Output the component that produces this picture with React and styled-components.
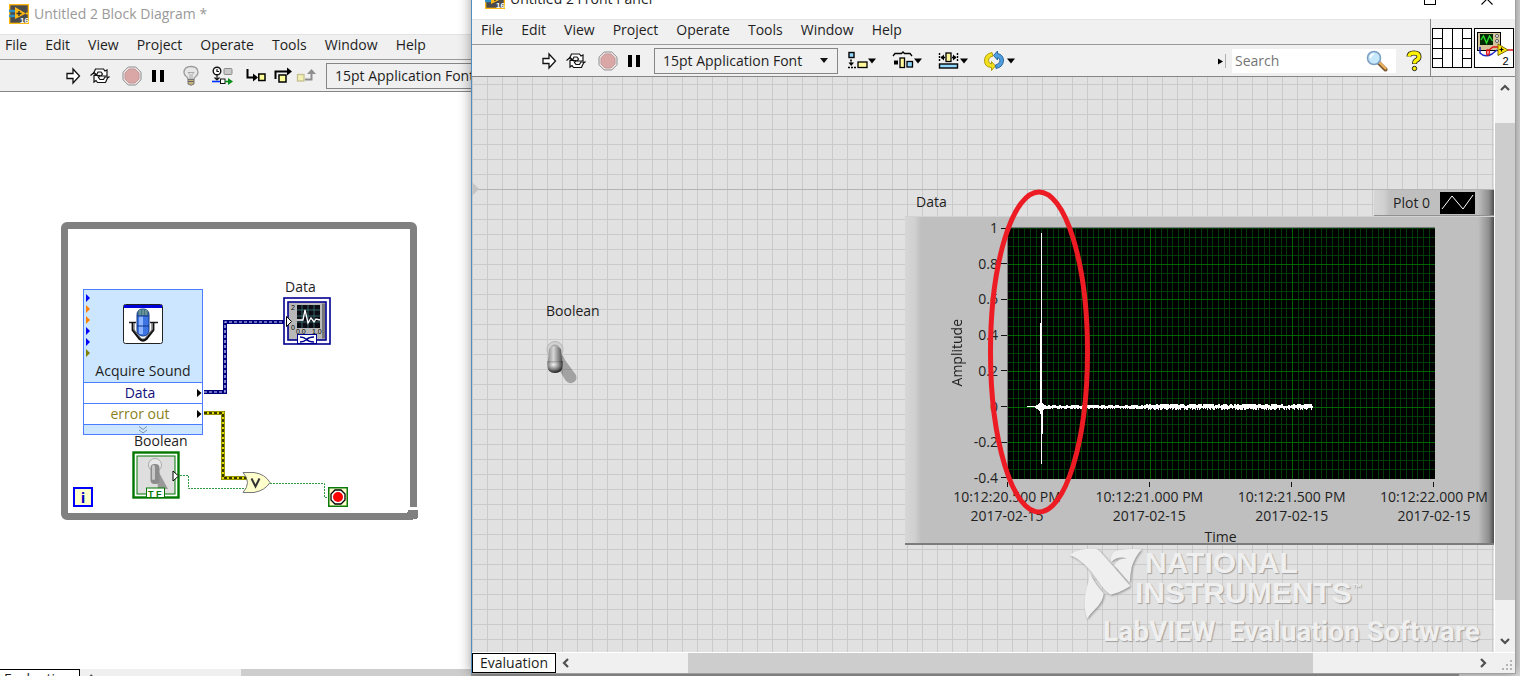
import React, { useState } from 'react'
import styled, { createGlobalStyle, css } from 'styled-components'

const menuItems = ['File', 'Edit', 'View', 'Project', 'Operate', 'Tools', 'Window', 'Help'];

const yLabels = ['1', '0.8', '0.6', '0.4', '0.2', '0', '-0.2', '-0.4'];

const xLabels = ['10:12:20.500 PM', '10:12:21.000 PM', '10:12:21.500 PM', '10:12:22.000 PM'];

const inputColors = ['#0000ff', '#ff8000', '#ff8000', '#0000ff', '#0000ff', '#808000'];

/* ---------- icons ---------- */

const ViIcon = () => (
  <svg width="20" height="20" viewBox="0 0 20 20">
    <rect x="0.5" y="0.5" width="19" height="19" fill="#4b4b4b" stroke="#fdb813" strokeWidth="1.6" />
    <path d="M0 7h6M0 12h6" stroke="#2d8fc4" strokeWidth="2.4" />
    <path d="M6 3l11 6.5L6 15z" fill="#fdb813" />
    <path d="M7.5 9.5h5M10 7v5" stroke="#333" strokeWidth="1.4" />
    <path d="M17 9.500h3" stroke="#fdb813" strokeWidth="2" />
    <text x="11" y="18.500" fontSize="8" fontWeight="700" fill="#fff" fontFamily="Liberation Sans">16</text>
  </svg>
);

const RunIcon = () => (
  <svg width="16" height="18" viewBox="0 0 16 18">
    <path d="M1 6.5h6v-4.500l6.500 7-6.500 7v-4.500H1z" fill="#fff" stroke="#111" strokeWidth="1.300" />
  </svg>
);

const RunContinuousIcon = () => (
  <svg width="20" height="18" viewBox="0 0 20 18">
    <path d="M3.500 6.500L5.500 2h8l1.500 2 2-1v6h-6l1.500-2-1.500-2H8L6.500 8z" fill="#fff" stroke="#111" strokeWidth="1.200" />
    <path d="M17.500 11l-2 4.500h-8L6 13.500l-2 1.500V8.500h6L8.500 10.500l1.500 2h3.500l1.500-2.500h4z" fill="#fff" stroke="#111" strokeWidth="1.200" />
    <path d="M0.500 8.500L4 5.500l4.500 4" fill="none" stroke="#111" strokeWidth="1.200" />
  </svg>
);

const AbortIcon = () => (
  <svg width="20" height="20" viewBox="0 0 20 20">
    <path d="M6.200 1h7.600L19 6.200v7.600L13.800 19H6.200L1 13.800V6.200z" fill="#efe6e6" stroke="#8f8f8f" />
    <path d="M7 3h6l4 4v6l-4 4H7l-4-4V7z" fill="#dba6a6" stroke="#c49a9a" />
  </svg>
);

const PauseIcon = () => (
  <svg width="16" height="16" viewBox="0 0 16 16">
    <path d="M2 2h4v12H2zM10 2h4v12h-4z" fill="#000" />
  </svg>
);

const BulbIcon = () => (
  <svg width="18" height="22" viewBox="0 0 18 22">
    <path d="M6 14.500Q6 12.500 4 11.200Q2 9.500 2 7.500Q2 1.500 9 1.500T16 7.500Q16 9.500 14 11.200Q12 12.500 12 14.500z" fill="#e6e6e6" stroke="#9a9a9a" strokeWidth="1.300" />
    <path d="M8 14V9.500L6 7.500M10 14V9.500l2-2M6 7.500h6" fill="none" stroke="#aaa" />
    <path d="M6 14.500h6v4.500q-3 2.500-6 0z" fill="#c7b37a" stroke="#777" />
    <path d="M6 16.500h6" stroke="#666" />
  </svg>
);

const RetainIcon = () => (
  <svg width="22" height="20" viewBox="0 0 22 20">
    <circle cx="5" cy="5" r="3.800" fill="#fff" stroke="#111" strokeWidth="1.400" />
    <path d="M5 3v2.500h2M5 9v5M2.500 11.500L5 14l2.500-2.500" fill="none" stroke="#111" strokeWidth="1.200" />
    <rect x="12" y="2.500" width="8" height="6" rx="1" fill="#c9c9c9" stroke="#8d8d8d" />
    <path d="M0 15.500h9" stroke="#0030ff" strokeWidth="1.600" />
    <rect x="8.500" y="13" width="4.500" height="4.500" fill="#fff" stroke="#111" />
    <path d="M13 15.500h4" stroke="#0b8f1c" strokeWidth="1.600" />
    <path d="M16 12l5 3.500-5 3.500z" fill="#0b8f1c" />
  </svg>
);

const StepIntoIcon = () => (
  <svg width="20" height="16" viewBox="0 0 20 16">
    <path d="M1.500 1v8.500h6" fill="none" stroke="#000" strokeWidth="2" />
    <path d="M7 5.500l5 4-5 4z" fill="#000" />
    <rect x="12.800" y="6" width="6.200" height="6.500" fill="#ffff99" stroke="#000" strokeWidth="1.500" />
  </svg>
);

const StepOverIcon = () => (
  <svg width="18" height="18" viewBox="0 0 18 18">
    <path d="M1.500 12V4.500h12" fill="none" stroke="#000" strokeWidth="2" />
    <path d="M13 0.500l5 4-5 4z" fill="#000" />
    <rect x="5" y="8" width="7" height="7" fill="#ffff99" stroke="#000" strokeWidth="1.500" />
  </svg>
);

const StepOutIcon = () => (
  <svg width="22" height="16" viewBox="0 0 22 16">
    <rect x="1.500" y="6.500" width="6.500" height="6.500" fill="#f3f0b4" stroke="#c4c090" strokeWidth="1.300" />
    <path d="M9 11.500h6.500V5" fill="none" stroke="#8e8e8e" strokeWidth="2" />
    <path d="M11 6l4.500-5L20 6z" fill="#8e8e8e" />
  </svg>
);

const AlignIcon = () => (
  <svg width="30" height="20" viewBox="0 0 30 20">
    <rect x="3" y="1.500" width="5" height="5" fill="#8fd8ff" stroke="#000" strokeWidth="1.400" />
    <path d="M5 8.500v4M2 16.500h8" stroke="#000" strokeWidth="1.600" strokeDasharray="2 1" />
    <path d="M2.500 11.500h5.500L5.200 15z" fill="#000" />
    <rect x="12" y="11" width="9" height="5.500" fill="#fff79c" stroke="#000" strokeWidth="1.300" />
    <path d="M22 7.500h8l-4 5z" fill="#000" />
  </svg>
);

const DistributeIcon = () => (
  <svg width="30" height="20" viewBox="0 0 30 20">
    <path d="M1 5l2-2.500h6.500L11 1l1.500 1.500H18L20 5" fill="none" stroke="#000" strokeWidth="1.300" />
    <rect x="2" y="9.500" width="4" height="4" fill="#000" />
    <rect x="8" y="7" width="4.500" height="9.500" fill="#fff79c" stroke="#000" strokeWidth="1.300" />
    <rect x="15" y="10.500" width="5.500" height="5.500" fill="#8fd8ff" stroke="#000" strokeWidth="1.300" />
    <path d="M22 7.500h8l-4 5z" fill="#000" />
  </svg>
);

const ResizeIcon = () => (
  <svg width="30" height="20" viewBox="0 0 30 20">
    <path d="M1.500 2v9M19.500 2v9" stroke="#000" strokeWidth="1.400" strokeDasharray="2 1" />
    <path d="M3 6.500h4M14 6.500h4" stroke="#000" strokeWidth="1.400" />
    <path d="M6 3.500v6L2.500 6.500zM15 3.500v6l3.500-3z" fill="#000" />
    <rect x="8" y="2" width="5" height="8.500" fill="#fff79c" stroke="#000" strokeWidth="1.300" />
    <rect x="1.500" y="13" width="18" height="4" fill="#8fd8ff" stroke="#000" strokeWidth="1.400" />
    <path d="M22 7.500h8l-4 5z" fill="#000" />
  </svg>
);

const ReorderIcon = () => (
  <svg width="32" height="20" viewBox="0 0 32 20">
    <path d="M8 1.500Q0 3 0.500 10.500Q1 16 7.500 16.500V19.500L11.500 15 7.500 10.500V13Q4.500 12.500 4.500 9.500Q4.500 6 9 5z" fill="#f2e11c" stroke="#a89400" strokeWidth="0.900" />
    <path d="M12 17.500Q19.500 16 19.500 9Q19 3.500 13.500 2.500V0L9.500 4.500 13.500 9V6.500Q16 7 16 10Q15.500 13 11.500 14z" fill="#4f9fe0" stroke="#1f5c94" strokeWidth="0.900" />
    <path d="M23 7.500h8l-4 5z" fill="#000" />
  </svg>
);

const MagnifierIcon = () => (
  <svg width="22" height="22" viewBox="0 0 22 22">
    <path d="M12.500 12.500l7 7" stroke="#7b5a34" strokeWidth="4" strokeLinecap="round" />
    <path d="M13.500 12.500l6 6" stroke="#f2b25c" strokeWidth="2.200" strokeLinecap="round" />
    <circle cx="8" cy="8" r="6.500" fill="#c6e8fb" stroke="#7c9fc4" strokeWidth="1.600" />
    <path d="M4.500 8Q4.500 4.500 8 4.200" fill="none" stroke="#fff" strokeWidth="1.800" />
  </svg>
);

const HelpIcon = () => (
  <svg width="16" height="22" viewBox="0 0 16 22">
    <path d="M3 6.500Q3 3 8 3T13 6.500Q13 9 10.500 10.200Q8.500 11.200 8.500 14" fill="none" stroke="#222" strokeWidth="5" />
    <path d="M3 6.500Q3 3 8 3T13 6.500Q13 9 10.500 10.200Q8.500 11.200 8.500 13.500" fill="none" stroke="#fff200" strokeWidth="3.400" />
    <circle cx="8.500" cy="18.500" r="2.200" fill="#fff200" stroke="#222" />
  </svg>
);

const ConnectorPane = () => (
  <svg width="40" height="40" viewBox="0 0 40 40">
    <rect x="0.500" y="0.500" width="39" height="39" fill="#fff" stroke="#000" />
    <path d="M10.500 0v40M20.500 0v40M30.500 0v40M0 20.500h40M0 10.500h10M0 30.500h10M30 10.500h10M30 30.500h10" stroke="#000" fill="none" />
  </svg>
);

const VipIcon = () => (
  <svg width="40" height="40" viewBox="0 0 40 40">
    <rect x="0.500" y="0.500" width="39" height="39" fill="#fff" stroke="#000" />
    <rect x="3.500" y="4.500" width="23" height="18" fill="#d5c39b" stroke="#000" />
    <rect x="6" y="6" width="13" height="11" fill="#042a04" />
    <path d="M7 12l2.500-4 3 7 3-7 3 5" fill="none" stroke="#2ee02e" strokeWidth="1.300" />
    <circle cx="23" cy="8" r="1.500" fill="#fff" stroke="#555" />
    <circle cx="23" cy="13" r="1.500" fill="#fff" stroke="#555" />
    <path d="M6 20v5q5 5 12 1l5-4M6 19v4" fill="none" stroke="#1a28c8" strokeWidth="1.500" />
    <path d="M13 22q-1 5 1 5 2-1 1-5zM15 22l4-3h6M33 22h6" fill="none" stroke="#e01818" strokeWidth="1.500" />
    <path d="M24 16l10 6-10 5.500z" fill="#ffe600" stroke="#7a6a00" />
    <path d="M25.500 21.500h4M27.500 19.500v4" stroke="#000" strokeWidth="1.200" />
    <text x="28.500" y="36.500" fontSize="11" fill="#000" fontFamily="Liberation Sans">2</text>
  </svg>
);

const MaximizeIcon = () => (
  <svg width="12" height="12" viewBox="0 0 12 12">
    <rect x="0.500" y="0.500" width="11" height="11" fill="none" stroke="#000" />
  </svg>
);

const CloseIcon = () => (
  <svg width="12" height="12" viewBox="0 0 12 12">
    <path d="M0.500 0.500l11 11M11.500 0.500l-11 11" stroke="#000" strokeWidth="1.100" />
  </svg>
);

const chevrons = {
  up: 'M2 8l4-4 4 4',
  down: 'M2 4l4 4 4-4',
  left: 'M8 2L4 6l4 4',
  right: 'M4 2l4 4-4 4',
};

const Chevron = ({ dir }) => (
  <svg width="12" height="12" viewBox="0 0 12 12">
    <path d={chevrons[dir]} fill="none" stroke="#505050" strokeWidth="2.200" />
  </svg>
);

const MicrophoneIcon = () => (
  <svg width="40" height="40" viewBox="0 0 40 40">
    <rect x="0.500" y="0.500" width="39" height="39" rx="2" fill="#fff" stroke="#222" />
    <path d="M1 1h38v3H1z" fill="#0000d8" />
    <path d="M6 18.500h7M27 18.500h8" stroke="#222" strokeWidth="1.500" />
    <path d="M10 18v8l7 9q3 2.500 6 0l7-9v-8" fill="none" stroke="#111" strokeWidth="2.800" />
    <path d="M10.500 19v6.500l7 8.500q2.500 2 5 0l7-8.500V19" fill="none" stroke="#999" strokeWidth="0.800" />
    <rect x="14" y="5" width="12" height="27" rx="5.500" fill="#3c74e4" stroke="#12357e" />
    <rect x="16" y="12" width="4" height="18" fill="#8db4ff" />
    <path d="M15 6.500q5-2.500 10 0v5H15z" fill="#47717c" />
    <path d="M14 12h12M14 22h12" stroke="#12357e" />
    <path d="M17 6v5M20 5.500v5.500M23 6v5" stroke="#9cc" strokeWidth="0.800" />
  </svg>
);

const Switch = () => (
  <svg width="34" height="46" viewBox="0 0 34 46">
    <defs>
      <linearGradient id="lever" x1="0" x2="1" y1="0" y2="0">
        <stop offset="0" stopColor="#8a8a8a" />
        <stop offset="0.400" stopColor="#d6d6d6" />
        <stop offset="1" stopColor="#4c4c4c" />
      </linearGradient>
      <radialGradient id="knob" cx="0.400" cy="0.300" r="0.700">
        <stop offset="0" stopColor="#f4f4f4" />
        <stop offset="0.500" stopColor="#909090" />
        <stop offset="1" stopColor="#1e1e1e" />
      </radialGradient>
    </defs>
    <path d="M15 15Q18 14 20 20L31 35Q33 41 27 43Q22 44 19 38L12 26z" fill="#000" opacity="0.280" />
    <circle cx="10" cy="9.500" r="8" fill="#d2d2d2" stroke="#b5b5b5" />
    <circle cx="10" cy="9.500" r="5" fill="#aaa" />
    <path d="M4 9q6-6 12 0l1.500 16H2.500z" fill="url(#lever)" />
    <path d="M2.500 21h15v5q0 7-7.500 7t-7.500-7z" fill="url(#knob)" />
  </svg>
);

const BooleanTerminal = () => (
  <svg width="48" height="48" viewBox="0 0 48 48">
    <rect x="1.500" y="1.500" width="45" height="45" fill="#fff" stroke="#007800" strokeWidth="2.400" />
    <rect x="5" y="5" width="38" height="38" fill="#dedede" stroke="#007800" />
    <path d="M24 16l12 22h-10z" fill="#999" />
    <circle cx="23" cy="14" r="6.500" fill="#e8e8e8" stroke="#aaa" />
    <rect x="18.500" y="13" width="9" height="20" rx="4" fill="#8c8c8c" />
    <rect x="20" y="14" width="3" height="15" rx="1.500" fill="#c8c8c8" />
    <path d="M41 20l5.500 5-5.500 5z" fill="#fff" stroke="#000" />
    <rect x="14.500" y="37" width="18" height="9.500" fill="#fff" stroke="#007800" />
    <text x="16" y="45.500" fontSize="9" fontWeight="700" fill="#007800" fontFamily="Liberation Sans">T F</text>
  </svg>
);

const WaveformTerminal = () => (
  <svg width="48" height="48" viewBox="0 0 48 48">
    <rect x="1" y="1" width="46" height="46" fill="#fff" stroke="#000090" strokeWidth="1.600" />
    <rect x="5" y="5" width="38" height="38" fill="#b8b8b8" stroke="#000090" strokeWidth="1.600" />
    <path d="M39 6.500h3v35h-3z" fill="#777" />
    <rect x="14" y="8" width="23" height="23" fill="#0c0c14" />
    <path d="M14 13h23M14 19h23M14 25h23M19 8v23M25 8v23M31 8v23" stroke="#3c7c7c" strokeWidth="0.800" />
    <path d="M14 23h6l2-10 3 13 3-5 3 4 2-3 4 1" fill="none" stroke="#fff" strokeWidth="1.300" />
    <text x="8" y="13" fontSize="7" fill="#000" fontFamily="Liberation Sans">2</text>
    <text x="8" y="33" fontSize="7" fill="#000" fontFamily="Liberation Sans">0</text>
    <text x="13" y="37" fontSize="7" fill="#000" fontFamily="Liberation Sans">0.0</text>
    <text x="29" y="37" fontSize="7" fill="#000" fontFamily="Liberation Sans">1.0</text>
    <path d="M3.500 19.500l5 5-5 5z" fill="#fff" stroke="#000" />
    <rect x="14.500" y="37.500" width="19" height="9" fill="#fff" stroke="#000090" />
    <path d="M17 40q4 0 6.500 2.500T31 45M17 45q4 0 6.500-2.500T31 40" fill="none" stroke="#000090" strokeWidth="1.500" />
  </svg>
);

const StopTerminal = () => (
  <svg width="20" height="20" viewBox="0 0 20 20">
    <rect x="0.750" y="0.750" width="18.500" height="18.500" fill="#ffffcc" stroke="#0a7a0a" strokeWidth="1.500" />
    <path d="M7 3h6l4 4v6l-4 4H7l-4-4V7z" fill="#fff" stroke="#000" strokeWidth="1.300" />
    <circle cx="10" cy="10" r="5" fill="#f00" />
  </svg>
);

const Wires = () => (
  <WireLayer width="480" height="520" viewBox="-4 92 480 520">
    {/* corner of the while loop, cut away for the resize handle */}
    <path d="M407 507h13v15h-13z" fill="#fff" />
    <path d="M408 510h10v8h-1v1h-4v1h-6v-8h1z" fill="#808080" />
    <path d="M204 392h21v-70h60" fill="none" stroke="#00007c" strokeWidth="4" />
    <path d="M204 392h21v-70h60" fill="none" stroke="#d8d8ff" strokeWidth="1.200" strokeDasharray="3 2" />
    <path d="M204 413h19v65h24" fill="none" stroke="#7c7c00" strokeWidth="4" />
    <path d="M204 413h19v65h24" fill="none" stroke="#e0d800" strokeWidth="2.600" />
    <path d="M204 413h19v65h24" fill="none" stroke="#000" strokeWidth="1.500" strokeDasharray="3 2" />
    <path d="M180 475.500h8.500v13H247M270 483.500h54.500v14h4" fill="none" stroke="#2f9a3f" strokeDasharray="2 1" />
    <path d="M243 472.500h11Q265 474 270 482.500Q265 490.500 254 492.500h-11Q252 482.500 243 472.500z" fill="#ffffcc" stroke="#777" />
    <path d="M251.500 478.500l4 8 4-8" fill="none" stroke="#333" strokeWidth="2" />
  </WireLayer>
);

/* ---------- waveform ---------- */

const noise = () => {
  let d = 'M20 180';
  let seed = 7;
  for (let x = 38; x <= 305; x++) {
    seed = (seed * 73 + 41) % 1009;
    const spread = x < 140 ? 2 : 3;
    const up = 1 + (seed % spread);
    const down = 1 + ((seed >> 3) % spread);
    d += `L${x} ${180 - up}L${x} ${180 + down}`;
  }
  return d;
};

const Plot = () => {
  const minorX = Array.from({ length: 75 }, (_, i) => Math.round(i * 5.7));
  const minorY = Array.from({ length: 28 }, (_, i) => Math.round(1 + i * 8.93));
  return (
    <svg width="428" height="252" viewBox="0 0 428 252" shapeRendering="crispEdges">
      <rect width="428" height="252" fill="#000" />
      {minorX.map(x => <rect key={x} x={x} y="0" width="1" height="252" fill="#003c08" />)}
      {minorY.map(y => <rect key={y} x="0" y={y} width="428" height="1" fill="#003c08" />)}
      {[143, 285].map(x => <rect key={x} x={x} y="0" width="1" height="252" fill="#006400" />)}
      {[37, 72, 108, 144, 180, 215].map(y => <rect key={y} x="0" y={y} width="428" height="1" fill="#006400" />)}
      <rect width="428" height="1" fill="#777" />
      <rect width="1" height="252" fill="#777" />
      <rect x="34" y="6" width="1" height="231" fill="#fff" />
      <rect x="33" y="96" width="2" height="91" fill="#fff" />
      <rect x="35" y="177" width="1" height="30" fill="#fff" />
      <rect x="20" y="179" width="16" height="1" fill="#fff" />
      <path d="M27 180l3-2 2-2h4l2 3v2l-2 3h-4l-2-2z" fill="#fff" />
      <path d={noise()} fill="none" stroke="#fff" strokeWidth="1" />
    </svg>
  );
};

/* ---------- window parts ---------- */

const LabWindow = ({ title, active, thumb, tools, side, scroll, children }) => (
  <Window $active={active}>
    <TitleBar>
      <ViIcon />
      <Title $active={active}>{title}</Title>
      {active && (
        <>
          <CaptionButton aria-label="Maximize"><MaximizeIcon /></CaptionButton>
          <CaptionButton aria-label="Close"><CloseIcon /></CaptionButton>
        </>
      )}
    </TitleBar>
    <Header>
      <Bars>
        <MenuBar>
          {menuItems.map(item => <MenuButton key={item}>{item}</MenuButton>)}
        </MenuBar>
        <Toolbar>{tools}</Toolbar>
      </Bars>
      {side}
    </Header>
    <Body>
      {children}
      {scroll}
    </Body>
    <StatusBar>
      <EvaluationTab>Evaluation</EvaluationTab>
      <ScrollButton aria-label="Scroll left"><Chevron dir="left" /></ScrollButton>
      <Track>
        <Gap $size={thumb[0]} />
        <Thumb $size={thumb[1]} />
        <Gap $size={thumb[2]} />
      </Track>
      {active && (
        <>
          <ScrollButton aria-label="Scroll right"><Chevron dir="right" /></ScrollButton>
          <Grip>
            <svg width="12" height="12" viewBox="0 0 12 12">
              <path d="M9 1h2v2H9zM5 5h2v2H5zM9 5h2v2H9zM1 9h2v2H1zM5 9h2v2H5zM9 9h2v2H9z" fill="#b5b5b5" />
            </svg>
          </Grip>
        </>
      )}
    </StatusBar>
  </Window>
);

const RunTools = () => (
  <>
    <ToolButton aria-label="Run"><RunIcon /></ToolButton>
    <ToolButton $gap={8} aria-label="Run continuously"><RunContinuousIcon /></ToolButton>
    <ToolButton $gap={12} aria-label="Abort"><AbortIcon /></ToolButton>
    <ToolButton $gap={8} aria-label="Pause"><PauseIcon /></ToolButton>
  </>
);

const FontPicker = ({ gap }) => {
  const [font, setFont] = useState('15pt Application Font');
  return (
    <FontBox $gap={gap}>
      <FontSelect aria-label="Text settings" value={font} onChange={(e) => setFont(e.target.value)}>
        <option>15pt Application Font</option>
      </FontSelect>
      <FontArrow width="10" height="6" viewBox="0 0 10 6">
        <path d="M1 0h8L5 5z" fill="#111" />
      </FontArrow>
    </FontBox>
  );
};

const OutputRow = ({ color, children }) => (
  <ExpressRow $color={color}>
    {children}
    <OutputArrow width="5" height="8" viewBox="0 0 5 8">
      <path d="M0 0l4.500 4L0 8z" fill="#000" />
    </OutputArrow>
  </ExpressRow>
);

const BlockDiagram = () => (
  <LabWindow
    title="Untitled 2 Block Diagram *"
    thumb={[141, 230, 0]}
    tools={
      <>
        <RunTools />
        <ToolButton $gap={16} aria-label="Highlight execution"><BulbIcon /></ToolButton>
        <ToolButton $gap={12} aria-label="Retain wire values"><RetainIcon /></ToolButton>
        <ToolButton $gap={12} aria-label="Step into"><StepIntoIcon /></ToolButton>
        <ToolButton $gap={8} aria-label="Step over"><StepOverIcon /></ToolButton>
        <ToolButton $gap={4} aria-label="Step out"><StepOutIcon /></ToolButton>
        <FontPicker gap={8} />
      </>
    }
  >
    <DiagramCanvas>
      <WhileLoop />
      <Wires />
      <Node $x={87} $y={197}>
        <ExpressVi>
          <ExpressHead>
            <MicrophoneIcon />
            <span>Acquire Sound</span>
            <Inputs width="6" height="66" viewBox="0 0 6 66">
              {inputColors.map((color, i) => (
                <path key={i} d={`M1 ${1 + i * 11}l4 4-4 4z`} fill={color} />
              ))}
            </Inputs>
          </ExpressHead>
          <OutputRow color="#10107c">Data</OutputRow>
          <OutputRow color="#8c7f20">error out</OutputRow>
          <ExpressFoot>
            <svg width="10" height="8" viewBox="0 0 10 8">
              <path d="M1 0.500l4 3 4-3M1 4l4 3 4-3" fill="none" stroke="#7d93a8" />
            </svg>
          </ExpressFoot>
        </ExpressVi>
      </Node>
      <Node $x={289} $y={185}>Data</Node>
      <Node $x={287} $y={205}><WaveformTerminal /></Node>
      <Node $x={138} $y={339}>Boolean</Node>
      <Node $x={136} $y={359}><BooleanTerminal /></Node>
      <Node $x={77} $y={395}><Iteration>i</Iteration></Node>
      <Node $x={332} $y={395}><StopTerminal /></Node>
    </DiagramCanvas>
  </LabWindow>
);

const FrontPanel = () => {
  const [search, setSearch] = useState('');
  return (
    <LabWindow
      title="Untitled 2 Front Panel"
      active
      thumb={[112, 627, 161]}
      tools={
        <>
          <RunTools />
          <FontPicker gap={12} />
          <ToolButton $gap={8} aria-label="Align objects"><AlignIcon /></ToolButton>
          <ToolButton $gap={16} aria-label="Distribute objects"><DistributeIcon /></ToolButton>
          <ToolButton $gap={16} aria-label="Resize objects"><ResizeIcon /></ToolButton>
          <ToolButton $gap={16} aria-label="Reorder"><ReorderIcon /></ToolButton>
          <SearchArea>
            <svg width="8" height="16" viewBox="0 0 8 16">
              <path d="M0 5.500l5 3-5 3z" fill="#000" />
              <path d="M7.500 1v14" stroke="#b0b0b0" />
            </svg>
            <SearchBox>
              <SearchInput
                type="text"
                aria-label="Search"
                placeholder="Search"
                value={search}
                onChange={(e) => setSearch(e.target.value)}
              />
              <MagnifierIcon />
            </SearchBox>
            <ToolButton aria-label="Context help"><HelpIcon /></ToolButton>
          </SearchArea>
        </>
      }
      side={
        <Panes>
          <ConnectorPane />
          <VipIcon />
        </Panes>
      }
      scroll={
        <VerticalBar>
          <ScrollButton aria-label="Scroll up"><Chevron dir="up" /></ScrollButton>
          <Track $vertical>
            <Gap $size={24} />
            <Thumb $size={477} />
            <Gap $size={30} />
          </Track>
          <ScrollButton aria-label="Scroll down"><Chevron dir="down" /></ScrollButton>
        </VerticalBar>
      }
    >
      <PanelCanvas>
        <OriginLine />
        <OriginMark width="7" height="14" viewBox="0 0 7 14">
          <path d="M0 0l7 7-7 7z" fill="#c4c4c4" />
        </OriginMark>
        <Node $x={74} $y={224}>Boolean</Node>
        <Node $x={73} $y={263}><Switch /></Node>
        <Watermark>
          <Eagle width="74" height="72" viewBox="0 0 222 216">
            <path d="M2 20Q30 0 78 2Q90 4 98 16L184 114Q150 136 124 140Q104 126 88 100Q50 40 2 20z" fill="#efefef" />
            <path d="M62 76Q86 120 104 136Q104 160 76 186Q62 200 54 212Q40 170 52 124Q60 100 62 76z" fill="#efefef" />
            <path d="M126 42Q122 12 148 6Q180 2 218 4Q196 30 188 58Q184 80 182 104L136 52Q150 28 174 32Q150 22 126 42z" fill="#efefef" />
          </Eagle>
          <Brand>
            <BrandLine>NATIONAL</BrandLine>
            <BrandLine>INSTRUMENTS<sup>™</sup></BrandLine>
          </Brand>
          <Product>LabVIEW<sup>™</sup> Evaluation Software</Product>
        </Watermark>
        <Graph>
          <GraphTop>
            <span>Data</span>
            <Legend>
              Plot 0
              <svg width="35" height="22" viewBox="0 0 35 22">
                <rect width="35" height="22" fill="#000" />
                <path d="M2 17L12 4l11 13L33 3" fill="none" stroke="#fff" />
              </svg>
            </Legend>
          </GraphTop>
          <GraphBody>
            <PlotRow>
              <AxisTitle>Amplitude</AxisTitle>
              <YAxis>
                {yLabels.map(label => <YLabel key={label}>{label}</YLabel>)}
              </YAxis>
              <Plot />
            </PlotRow>
            <XAxis>
              {xLabels.map(label => (
                <XLabel key={label}>
                  <span>{label}</span>
                  <span>2017-02-15</span>
                </XLabel>
              ))}
            </XAxis>
            <TimeTitle>Time</TimeTitle>
          </GraphBody>
          <Marker width="104" height="328" viewBox="0 0 104 328">
            <ellipse cx="52" cy="164" rx="48.500" ry="160" fill="none" stroke="#ed1c24" strokeWidth="5" />
          </Marker>
        </Graph>
      </PanelCanvas>
    </LabWindow>
  );
};

const App = () => {
  return (
    <>
      <GlobalStyle />
      <Desktop>
        <BlockDiagram />
        <FrontPanel />
      </Desktop>
    </>
  )
}

export default App

const GlobalStyle = createGlobalStyle`
  * {
    box-sizing: border-box;
  }
  body {
    margin: 0;
    font-family: "Open Sans", "Noto Sans", sans-serif;
    font-size: 14px;
    line-height: 20px;
    color: #1e1e1e;
  }
  button, input, select {
    font: inherit;
    color: inherit;
    padding: 0;
    border: none;
    background: transparent;
  }
  svg {
    display: block;
    flex-shrink: 0;
  }
`;

const Desktop = styled.div`
  display: grid;
  grid-template-columns: 471px minmax(0, 1fr);
  grid-template-rows: minmax(0, 1fr);
  height: 100vh;
  overflow: hidden;
  background: linear-gradient(to right, #9a9a9a 96%, #dcdcdc 96%);
`;

const Window = styled.section`
  display: flex;
  flex-direction: column;
  min-width: 0;
  background: #fff;
  border: 1px solid #a0a0a0;
  ${({ $active }) => $active ? css`
    position: relative;
    margin: -15px 4px 2px 0;
    border-left-color: #4f8cc0;
    box-shadow: 0 0 12px rgba(0, 0, 0, 0.4);
  ` : css`
    margin: 0 0 -14px -5px;
    border-top-color: #fff;
    border-right: none;
  `}
`;

const TitleBar = styled.div`
  display: flex;
  align-items: center;
  flex-shrink: 0;
  height: 33px;
  padding: 0 0 8px 13px;
`;

const Title = styled.span`
  flex: 1;
  margin-left: 5px;
  white-space: nowrap;
  color: ${({ $active }) => $active ? '#1e1e1e' : '#999999'};
`;

const CaptionButton = styled.button`
  display: flex;
  align-items: center;
  justify-content: center;
  width: 57px;
  height: 24px;
`;

const Header = styled.div`
  display: flex;
  flex-shrink: 0;
  background: #f0f0f0;
  border-bottom: 1px solid #868686;
`;

const Bars = styled.div`
  flex: 1;
  min-width: 0;
`;

const MenuBar = styled.nav`
  display: flex;
  align-items: center;
  gap: 18px;
  height: 26px;
  padding: 0 9px 4px;
  border-top: 1px solid #e4e4e4;
  border-bottom: 1px solid #999999;
`;

const MenuButton = styled.button`
  line-height: 20px;
`;

const Toolbar = styled.div`
  display: flex;
  align-items: center;
  height: 31px;
  padding: 1px 0 0 70px;
  overflow: hidden;
`;

const ToolButton = styled.button`
  flex-shrink: 0;
  margin-left: ${({ $gap }) => $gap || 0}px;
`;

const FontBox = styled.div`
  position: relative;
  flex-shrink: 0;
  width: 184px;
  margin-left: ${({ $gap }) => $gap}px;
`;

const FontSelect = styled.select`
  appearance: none;
  display: block;
  width: 100%;
  height: 26px;
  padding: 0 8px;
  border: 1px solid #868686;
  border-radius: 0;
`;

const FontArrow = styled.svg`
  position: absolute;
  top: 10px;
  right: 9px;
  pointer-events: none;
`;

const SearchArea = styled.div`
  display: flex;
  align-items: center;
  gap: 6px;
  margin-left: auto;
  padding-right: 8px;

  ${ToolButton} {
    margin-left: 4px;
  }
`;

const SearchBox = styled.div`
  display: flex;
  align-items: center;
  width: 164px;
  height: 24px;
  padding: 0 8px 0 3px;
  background: #fff;
`;

const SearchInput = styled.input`
  flex: 1;
  min-width: 0;
  outline: none;
  &::placeholder {
    color: #757575;
  }
`;

const Panes = styled.div`
  display: flex;
  align-items: center;
  gap: 2px;
  padding: 0 1px;
  border-left: 1px solid #868686;
`;

const Body = styled.div`
  display: flex;
  flex: 1;
  min-height: 0;
`;

const DiagramCanvas = styled.div`
  position: relative;
  flex: 1;
  overflow: hidden;
  background: #fff;
`;

const PanelCanvas = styled.div`
  position: relative;
  flex: 1;
  overflow: hidden;
  background-color: #e1e1e1;
  background-image:
    linear-gradient(to right, #cacaca 1px, transparent 1px),
    linear-gradient(to bottom, #cacaca 1px, transparent 1px);
  background-size: 15px 15px;
  background-position: 0 7px;
`;

const Node = styled.div`
  position: absolute;
  left: ${({ $x }) => $x}px;
  top: ${({ $y }) => $y}px;
`;

const WireLayer = styled.svg`
  position: absolute;
  left: 0;
  top: 0;
`;

const WhileLoop = styled.div`
  position: absolute;
  left: 65px;
  top: 130px;
  width: 356px;
  height: 298px;
  border: 7px solid #808080;
  border-radius: 6px;
`;

const ExpressVi = styled.div`
  width: 120px;
  background: #cce6ff;
  border: 1px solid #4a7dff;
`;

const ExpressHead = styled.div`
  position: relative;
  display: flex;
  flex-direction: column;
  align-items: center;
  gap: 16px;
  height: 92px;
  padding-top: 14px;
  line-height: 22px;
`;

const Inputs = styled.svg`
  position: absolute;
  left: 1px;
  top: 3px;
`;

const ExpressRow = styled.div`
  position: relative;
  height: 21px;
  padding-right: 6px;
  border-top: 1px solid #4a7dff;
  background: #fff;
  text-align: center;
  color: ${({ $color }) => $color};
`;

const OutputArrow = styled.svg`
  position: absolute;
  right: 0;
  top: 6px;
`;

const ExpressFoot = styled.div`
  display: flex;
  justify-content: center;
  height: 10px;
  padding-top: 1px;
  border-top: 1px solid #4a7dff;
`;

const Iteration = styled.div`
  width: 20px;
  height: 20px;
  border: 2px solid #0000ff;
  background: #ffffcc;
  font-size: 15px;
  font-weight: 700;
  line-height: 16px;
  text-align: center;
  color: #0000c0;
`;

const VerticalBar = styled.div`
  display: flex;
  flex-direction: column;
  width: 21px;
  border-left: 1px solid #fff;
  background: #f0f0f0;
`;

const ScrollButton = styled.button`
  display: flex;
  align-items: center;
  justify-content: center;
  flex-shrink: 0;
  min-width: 20px;
  height: 22px;
`;

const Track = styled.div`
  display: flex;
  flex: 1;
  flex-direction: ${({ $vertical }) => $vertical ? 'column' : 'row'};
`;

const Gap = styled.div`
  flex: ${({ $size }) => $size} 0 0;
`;

const Thumb = styled.div`
  flex: ${({ $size }) => $size} 0 0;
  background: #cdcdcd;
`;

const StatusBar = styled.div`
  display: flex;
  flex-shrink: 0;
  height: 21px;
  border-top: 1px solid #fff;
  background: #f0f0f0;

  ${ScrollButton} {
    height: 20px;
  }
`;

const EvaluationTab = styled.div`
  width: 84px;
  border: 1px solid #000;
  background: #fff;
  line-height: 18px;
  text-align: center;
`;

const Grip = styled.div`
  display: flex;
  align-items: flex-end;
  padding: 0 2px 2px 8px;
`;

const OriginLine = styled.div`
  position: absolute;
  top: 112px;
  left: 0;
  right: 0;
  height: 1px;
  background: #b4b4b4;
`;

const OriginMark = styled.svg`
  position: absolute;
  left: 0;
  top: 105px;
`;

const Graph = styled.div`
  position: absolute;
  top: 113px;
  right: 0;
  width: 589px;
`;

const GraphTop = styled.div`
  display: flex;
  justify-content: space-between;
  height: 26px;
  padding: 2px 0 0 11px;
`;

const metal = css`
  background: linear-gradient(to right, #d6d6d6 0, #d0d0d0 10px, #bfbfbf 16px, #bfbfbf calc(100% - 16px), #8e8e8e calc(100% - 5px), #4c4c4c 100%);
`;

const Legend = styled.div`
  display: flex;
  align-items: center;
  gap: 10px;
  width: 120px;
  height: 26px;
  margin-top: -2px;
  padding-left: 19px;
  border-bottom: 1px solid #909090;
  ${metal}
`;

const GraphBody = styled.div`
  height: 329px;
  border-top: 1px solid #d2d2d2;
  border-bottom: 2px solid #7c7c7c;
  ${metal}
`;

const PlotRow = styled.div`
  display: flex;
  align-items: center;
  padding-left: 42px;
  height: 272px;
`;

const AxisTitle = styled.span`
  writing-mode: vertical-rl;
  transform: rotate(180deg);
`;

const YAxis = styled.div`
  display: flex;
  flex-direction: column;
  justify-content: space-between;
  width: 40px;
  height: 270px;
`;

const YLabel = styled.span`
  display: flex;
  align-items: center;
  justify-content: flex-end;
  gap: 3px;
  &::after {
    content: "";
    width: 6px;
    height: 1px;
    background: #111;
  }
`;

const XAxis = styled.div`
  display: flex;
  justify-content: space-between;
  width: 537px;
  margin-top: -7px;
  margin-left: 47px;
`;

const XLabel = styled.span`
  display: flex;
  flex-direction: column;
  align-items: center;
  width: 110px;
  line-height: 19px;
  white-space: nowrap;
  &::before {
    content: "";
    width: 1px;
    height: 5px;
    background: #111;
  }
`;

const TimeTitle = styled.div`
  margin: 2px 0 0 42px;
  text-align: center;
`;

const Marker = styled.svg`
  position: absolute;
  left: 82px;
  top: -2px;
  pointer-events: none;
`;

const Watermark = styled.div`
  position: absolute;
  right: 6px;
  bottom: 6px;
  width: 419px;
  height: 98px;
  color: #efefef;
  font-family: "Liberation Sans", sans-serif;
  font-weight: 700;
  text-shadow: 1px 1px 1px #a0a0a0;
  sup {
    font-size: 10px;
    line-height: 0;
    vertical-align: 12px;
  }
`;

const Eagle = styled.svg`
  position: absolute;
  left: 0;
  top: 0;
  filter: drop-shadow(1px 1px 1px #909090);
`;

const Brand = styled.div`
  padding-left: 66px;
`;

const BrandLine = styled.div`
  font-size: 30px;
  line-height: 30px;
  &:first-child {
    padding-left: 10px;
  }
`;

const Product = styled.div`
  padding: 8px 0 0 34px;
  font-family: Roboto, sans-serif;
  font-size: 28px;
  line-height: 32px;
  white-space: nowrap;
`;
